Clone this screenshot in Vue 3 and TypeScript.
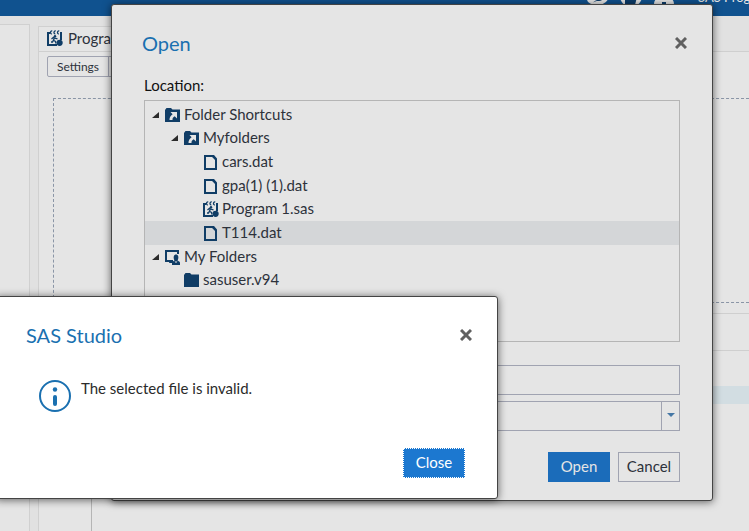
<script setup lang="ts">
import { ref } from 'vue'

type IconName = 'shortcut' | 'file' | 'program' | 'computer' | 'folder'

interface TreeNode {
  label: string
  icon: IconName
  level: number
  open?: boolean
}

const nodes: TreeNode[] = [
  { label: 'Folder Shortcuts', icon: 'shortcut', level: 1, open: true },
  { label: 'Myfolders', icon: 'shortcut', level: 2, open: true },
  { label: 'cars.dat', icon: 'file', level: 3 },
  { label: 'gpa(1) (1).dat', icon: 'file', level: 3 },
  { label: 'Program 1.sas', icon: 'program', level: 3 },
  { label: 'T114.dat', icon: 'file', level: 3 },
  { label: 'My Folders', icon: 'computer', level: 1, open: true },
  { label: 'sasuser.v94', icon: 'folder', level: 2 },
]

const selected = ref('T114.dat')
const fileName = ref('')
</script>

<template>
  <div class="app">
    <svg class="defs" aria-hidden="true">
      <symbol id="i-shortcut" viewBox="0 0 16 16">
        <path d="M0 3 1.500 1H6l1.500 1.500H15V15H0z" />
        <path class="cut" d="M5.500 5H12v6.500L9.700 9.300C8.200 10.200 7.300 11.300 7.500 13H4.500C4.400 10.500 5.500 8.600 7.600 7.200z" />
      </symbol>
      <symbol id="i-file" viewBox="0 0 16 16">
        <path class="line" d="M2 2h7.500L13 5.500V15H2z" />
        <path d="M9 1h2l3 3.500V6h-1.500z" />
      </symbol>
      <symbol id="i-program" viewBox="0 0 16 16">
        <path class="line" d="M3 3H1v12h9M13 3h1v7" />
        <path class="curl" d="M5.200 1C3.200.5 2.800 4 4.800 4M8.700 1c-2-.5-2.400 3-.4 3M12.200 1c-2-.5-2.400 3-.4 3" />
        <circle cx="8" cy="6.200" r="1.200" />
        <path class="curl" d="M4.500 9 6.500 7.300 8 8.200l2.500.6M7.300 8 6.500 10.300 8.500 11.500 9 13.500M6.300 10.500 5.500 12H4" />
        <circle cx="12.600" cy="12.800" r="3.100" />
      </symbol>
      <symbol id="i-computer" viewBox="0 0 16 16">
        <path class="line" d="M8 12H1V2h12v3" />
        <path d="M5 11h3v3H4z" />
        <path d="M7 16v-2c0-1.500 1.500-2 2.500-2.500C8 9 8.500 5.500 11 5.500S14 9 12.500 11.500c1 .5 2.500 1 2.500 2.500v2z" />
        <path class="cut" d="M9.500 12.500h3L11 14z" />
      </symbol>
      <symbol id="i-folder" viewBox="0 0 16 16">
        <path d="M0 3 1.500 1H6l1.500 1.500H15V15H0z" />
      </symbol>
      <symbol id="i-close" viewBox="0 0 12 12">
        <path class="cross" d="M1 1 11 11M11 1 1 11" />
      </symbol>
    </svg>

    <header class="banner">
      <svg class="tool" viewBox="0 0 22 22" aria-hidden="true">
        <path d="M0 16 15 13h7c0 4-5 9-11 9S0 20 0 16z" />
        <path class="hole" d="M5 21c2-3 4-3 7-3 2 0 4-1 4-3-3 2-8 1-11 6z" />
      </svg>
      <svg class="tool" viewBox="0 0 22 22" aria-hidden="true">
        <circle cx="11" cy="13" r="11" />
        <path class="hole" d="M5 14h12l-2 8H5z" />
      </svg>
      <svg class="tool" viewBox="0 0 22 22" aria-hidden="true">
        <path d="M6 1h10v14c4 1 5 3 5 7H1c0-4 1-6 5-7z" />
        <path class="hole" d="M9 19h4v3H9z" />
      </svg>
      <span class="role">SAS Programmer</span>
    </header>

    <main class="workspace">
      <aside class="side"></aside>
      <section class="editor">
        <div class="tabs">
          <span class="tab">
            <svg class="icon"><use href="#i-program" /></svg>
            Program 1
          </span>
        </div>
        <div class="toolbar">
          <button type="button" class="tool-btn">Settings</button>
          <button type="button" class="tool-btn" aria-label="Code"></button>
        </div>
        <div class="drop"></div>
        <div class="results">
          <div class="results-bar"></div>
          <div class="results-grid"><span class="gutter"></span><span class="lines"></span></div>
        </div>
      </section>
    </main>

    <section class="dialog open-dialog" role="dialog" aria-labelledby="open-title">
      <div class="head">
        <h2 id="open-title">Open</h2>
        <button type="button" class="x" aria-label="Close"><svg><use href="#i-close" /></svg></button>
      </div>
      <p id="location" class="location">Location:</p>
      <div class="tree-box">
        <ul class="tree" role="tree" aria-labelledby="location">
          <li
            v-for="node in nodes"
            :key="node.label"
            role="treeitem"
            :aria-expanded="node.open"
            :aria-selected="node.label === selected"
            :class="['node', 'level-' + node.level, { selected: node.label === selected }]"
            @click="selected = node.label"
          >
            <svg class="twist" viewBox="0 0 8 8"><path v-if="node.open" d="M7 1v6H0z" /></svg>
            <svg class="icon"><use :href="'#i-' + node.icon" /></svg>
            <span class="name">{{ node.label }}</span>
          </li>
        </ul>
      </div>
      <form class="fields" @submit.prevent>
        <input v-model="fileName" type="text" aria-label="Name" />
        <div class="picker">
          <select aria-label="File type"><option value=""></option></select>
          <span class="arrow"><svg viewBox="0 0 8 4"><path d="M0 0h8L4 4z" /></svg></span>
        </div>
      </form>
      <div class="actions">
        <button type="button" class="btn primary">Open</button>
        <button type="button" class="btn">Cancel</button>
      </div>
    </section>

    <section class="dialog message" role="alertdialog" aria-labelledby="msg-title">
      <div class="head">
        <h2 id="msg-title">SAS Studio</h2>
        <button type="button" class="x" aria-label="Close"><svg><use href="#i-close" /></svg></button>
      </div>
      <div class="body">
        <svg class="info" viewBox="0 0 32 32" aria-hidden="true">
          <circle class="ring" cx="16" cy="16" r="15" />
          <circle cx="16" cy="9.500" r="2.200" />
          <rect x="14" y="15" width="4" height="11" rx="2" />
        </svg>
        <p>The selected file is invalid.</p>
      </div>
      <div class="actions">
        <button type="button" class="btn primary focused">Close</button>
      </div>
    </section>
  </div>
</template>

<style>
body {
  margin: 0;
  overflow: hidden;
}
</style>

<style scoped>
.app {
  position: relative;
  display: flex;
  flex-direction: column;
  box-sizing: border-box;
  height: 100vh;
  overflow: hidden;
  background: #e1e1e1;
  color: #2d323b;
  font: 15px/20px Lato, "Open Sans", sans-serif;
}
.app *,
.app *::before {
  box-sizing: border-box;
}
.defs {
  position: absolute;
  width: 0;
  height: 0;
}
h2,
p,
ul {
  margin: 0;
  padding: 0;
}
button,
input,
select {
  font: inherit;
  color: inherit;
}
.icon {
  flex: none;
  width: 16px;
  height: 16px;
  fill: #103d66;
}
.line {
  fill: none;
  stroke: #103d66;
  stroke-width: 2;
}
.curl {
  fill: none;
  stroke: #103d66;
  stroke-width: 1.3;
}
.cut {
  fill: #e5e5e5;
}

/* Application behind the dialogs */
.banner {
  display: flex;
  flex: none;
  align-items: flex-end;
  justify-content: flex-end;
  gap: 11px;
  height: 46px;
  margin: -30px -58px 0 0;
  padding-bottom: 11px;
  background: #10528f;
  color: #e5e5e5;
}
.tool {
  width: 22px;
  height: 22px;
  fill: #e5e5e5;
}
.hole {
  fill: #0c3c6a;
}
.role {
  width: 109px;
  margin-left: 12px;
  font-size: 13px;
  line-height: 16px;
  white-space: nowrap;
}
.workspace {
  display: flex;
  flex: 1;
  gap: 8px;
  padding-top: 8px;
}
.side {
  width: 30px;
  background: #e5e5e5;
  border: solid #d0d0d0;
  border-width: 1px 1px 0 0;
}
.editor {
  display: flex;
  flex: 1;
  flex-direction: column;
  margin-top: 2px;
  background: #e5e5e5;
  border-left: 1px solid #d0d0d0;
}
.tabs {
  display: flex;
  height: 26px;
  background: #e1e1e1;
  border-bottom: 1px solid #cfcfcf;
}
.tab {
  display: flex;
  align-items: center;
  gap: 5px;
  padding: 0 16px 2px 8px;
  background: #e5e5e5;
  border-top: 1px solid #d0d0d0;
}
.toolbar {
  display: flex;
  padding: 4px 8px;
}
.tool-btn {
  min-width: 62px;
  height: 21px;
  padding: 0 8px;
  margin-right: -1px;
  background: none;
  border: 1px solid #a0a3b1;
  font-size: 12px;
  line-height: 19px;
}
.tool-btn:first-child {
  border-radius: 2px 0 0 2px;
}
.drop {
  height: 205px;
  margin: 17px 0 0 14px;
  border: 1px dashed #8a95a6;
  border-right: 0;
}
.results {
  display: flex;
  flex: 1;
  flex-direction: column;
  margin-top: 10px;
  border-top: 1px solid #cfcfcf;
}
.results-bar {
  height: 37px;
  border-bottom: 1px solid #cfcfcf;
}
.results-grid {
  display: flex;
  flex: 1;
}
.gutter {
  width: 53px;
  border-right: 1px solid #b5b5b5;
}
.lines {
  flex: 1;
  height: 18px;
  margin-top: 35px;
  background: #d2dde2;
}

/* Dialogs */
.dialog {
  position: absolute;
  display: flex;
  flex-direction: column;
  padding: 23px 32px 18px;
  background: #e5e5e5;
  border: 1px solid #444;
  border-radius: 3px;
  box-shadow: 0 1px 8px rgba(0, 0, 0, 0.6);
}
.open-dialog {
  top: 4px;
  left: 111px;
  width: 602px;
}
.message {
  top: 296px;
  left: -5px;
  width: 503px;
  padding-bottom: 20px;
  background: #fff;
}
.head {
  display: flex;
  align-items: center;
  justify-content: space-between;
  height: 30px;
}
h2 {
  margin-left: -2px;
  color: #1a70b0;
  font-size: 20px;
  font-weight: 400;
  line-height: 30px;
}
.x {
  display: grid;
  place-items: center;
  width: 20px;
  height: 20px;
  margin-right: -11px;
  padding: 0;
  background: none;
  border: 0;
}
.x svg {
  width: 12px;
  height: 12px;
}
.cross {
  fill: none;
  stroke: #606060;
  stroke-width: 3;
}
.location {
  margin-top: 17px;
  color: #111;
}
.tree-box {
  height: 242px;
  margin-top: 5px;
  padding-top: 2px;
  border: 1px solid #b5b5b5;
}
.tree {
  display: grid;
  grid-template-rows: repeat(8, 1fr);
  height: 189px;
  list-style: none;
}
.node {
  display: flex;
  align-items: center;
  white-space: nowrap;
}
.node .icon {
  margin: 0 3px 0 5px;
}
.name {
  padding-bottom: 2px;
}
.level-1 {
  padding-left: 7px;
}
.level-2 {
  padding-left: 26px;
}
.level-3 {
  padding-left: 45px;
}
.selected {
  background: #d4d6d8;
}
.twist {
  width: 8px;
  height: 8px;
  fill: #2b2b2b;
}
.fields {
  display: grid;
  gap: 6px;
  margin-top: 23px;
  padding-left: 96px;
}
.fields input,
.picker {
  width: 100%;
  height: 30px;
  background: none;
  border: 1px solid #a0a3b1;
}
.picker {
  display: flex;
}
.picker select {
  flex: 1;
  appearance: none;
  background: none;
  border: 0;
}
.arrow {
  display: grid;
  place-items: center;
  width: 18px;
  padding-bottom: 2px;
  border-left: 1px solid #a0a3b1;
}
.arrow svg {
  width: 8px;
  height: 4px;
  fill: #4577a5;
}
.actions {
  display: flex;
  justify-content: flex-end;
  gap: 8px;
  margin-top: 21px;
}
.btn {
  width: 62px;
  height: 30px;
  padding: 0 0 2px;
  background: none;
  border: 1px solid #a0a3b1;
  line-height: 24px;
}
.primary {
  background: #1b6cba;
  border-color: #1b6cba;
  color: #e5e5e5;
}
.focused {
  background: #1c78d0;
  border: 1px dotted #fff;
  color: #fff;
}
.body {
  display: flex;
  align-items: flex-start;
  gap: 10px;
  padding: 30px 0 0 11px;
}
.body p {
  color: #2b2b2b;
  line-height: 16px;
}
.info {
  width: 32px;
  height: 32px;
  fill: #1a70b0;
}
.ring {
  fill: none;
  stroke: #1a70b0;
  stroke-width: 2;
}
.message .actions {
  margin-top: 36px;
}
</style>
